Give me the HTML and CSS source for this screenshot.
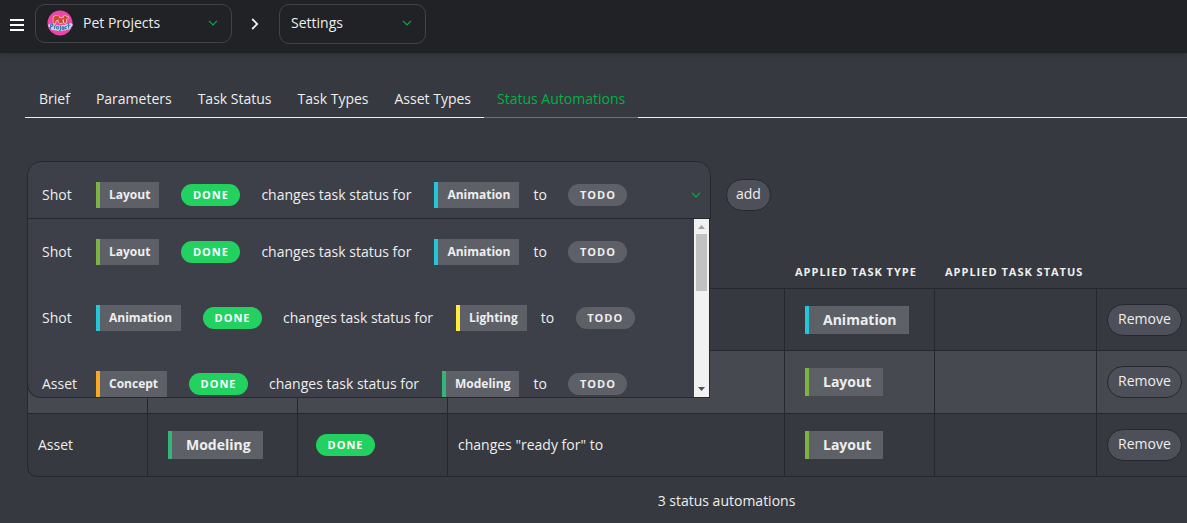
FILE: index.html
```html
<!DOCTYPE html>
<html lang="en">
<head>
<meta charset="utf-8">
<meta name="viewport" content="width=device-width, initial-scale=1">
<title>Pet Projects - Settings</title>
<link rel="stylesheet" href="styles.css">
</head>
<body>
<header class="topbar">
  <button class="menu-button" type="button" aria-label="Menu"><span></span><span></span><span></span></button>
  <button class="picker picker-project" type="button">
    <svg class="avatar" viewBox="0 0 26 26" aria-hidden="true">
      <circle cx="13" cy="13" r="12.5" fill="#ee45a6"/>
      <g fill="none" stroke-linecap="round" stroke-linejoin="round">
        <path d="M7.500 12.500V7.500c4-2 6 1 .5 2.500M13 11c3-.5 1-3-.3-1.500-1 2 .5 3 2.300 2.200M18 6.500v5.500M16 8.500l4-.8" stroke="#f3d9dc" stroke-width="3.400"/>
        <path d="M3 15.500l5 .8 5 1 5-.8 6-1.500M5 18l4 .8 4 .4 5-.7 4-1" stroke="#c3d9ea" stroke-width="3.400"/>
        <path d="M7.500 12.500V7.500c4-2 6 1 .5 2.500M13 11c3-.5 1-3-.3-1.500-1 2 .5 3 2.300 2.200M18 6.500v5.500M16 8.500l4-.8" stroke="#c94b25" stroke-width="2.200"/>
        <path d="M3.500 18.500v-4c3-1 3.500 2 .3 2M7.500 18.500v-2.300l1.300-.4M10.500 16.500a1.200 1.200 0 1 0 .1 0M13.500 16v4l-1 .5M15 18h2c0-2-2-2-2 0s1.500 1.500 2 1M19.500 16.200c-2 0-2 3 0 2.500M21.500 13.500v4.500M20.500 15.500l2.500-.3" stroke="#3c78aa" stroke-width="1.100"/>
      </g>
    </svg>
    <span class="picker-label">Pet Projects</span>
    <svg class="chevron" viewBox="0 0 10 6" aria-hidden="true"><path d="M1 .8l4 4 4-4"/></svg>
  </button>
  <svg class="crumb" viewBox="0 0 8 12" aria-hidden="true"><path d="M1.200 1l5 5-5 5"/></svg>
  <button class="picker picker-section" type="button">
    <span class="picker-label">Settings</span>
    <svg class="chevron" viewBox="0 0 10 6" aria-hidden="true"><path d="M1 .8l4 4 4-4"/></svg>
  </button>
</header>
<main class="content">
  <nav class="tabs">
    <a class="tab" href="#brief">Brief</a>
    <a class="tab" href="#parameters">Parameters</a>
    <a class="tab" href="#task-status">Task Status</a>
    <a class="tab" href="#task-types">Task Types</a>
    <a class="tab" href="#asset-types">Asset Types</a>
    <a class="tab tab-active" href="#status-automations" aria-current="page">Status Automations</a>
  </nav>
  <section class="chooser">
    <div class="combo">
      <button class="combo-current rule" type="button" aria-expanded="true">
        <span class="entity">Shot</span><span class="tag layout">Layout</span><span class="pill done">Done</span><span class="change">changes task status for</span><span class="tag animation">Animation</span><span class="to">to</span><span class="pill">Todo</span>
        <svg class="chevron" viewBox="0 0 10 6" aria-hidden="true"><path d="M1 .8l4 4 4-4"/></svg>
      </button>
      <div class="combo-panel">
        <ul class="options" role="listbox" aria-label="Status automations">
          <li class="rule" role="option" aria-selected="true"><span class="entity">Shot</span><span class="tag layout">Layout</span><span class="pill done">Done</span><span class="change">changes task status for</span><span class="tag animation">Animation</span><span class="to">to</span><span class="pill">Todo</span></li>
          <li class="rule" role="option" aria-selected="false"><span class="entity">Shot</span><span class="tag animation">Animation</span><span class="pill done">Done</span><span class="change">changes task status for</span><span class="tag lighting">Lighting</span><span class="to">to</span><span class="pill">Todo</span></li>
          <li class="rule" role="option" aria-selected="false"><span class="entity">Asset</span><span class="tag concept">Concept</span><span class="pill done">Done</span><span class="change">changes task status for</span><span class="tag modeling">Modeling</span><span class="to">to</span><span class="pill">Todo</span></li>
        </ul>
        <div class="scrollbar" aria-hidden="true">
          <svg viewBox="0 0 15 15"><path d="M4 10h7L7.500 6z" fill="#a3a3a3"/></svg>
          <div class="thumb"></div>
          <svg class="scroll-down" viewBox="0 0 15 15"><path d="M4 5h7L7.500 9z" fill="#505050"/></svg>
        </div>
      </div>
    </div>
    <button class="button add" type="button">add</button>
  </section>
  <table class="rules">
    <colgroup><col class="col-entity"><col class="col-type"><col class="col-status"><col><col class="col-type"><col class="col-applied"><col class="col-action"></colgroup>
    <thead>
      <tr><th></th><th></th><th></th><th></th><th scope="col">Applied task type</th><th scope="col">Applied task status</th><th></th></tr>
    </thead>
    <tbody>
      <tr><td></td><td></td><td></td><td></td><td><span class="tag tag-large animation">Animation</span></td><td></td><td><button class="button" type="button">Remove</button></td></tr>
      <tr><td></td><td></td><td></td><td></td><td><span class="tag tag-large layout">Layout</span></td><td></td><td><button class="button" type="button">Remove</button></td></tr>
      <tr><td>Asset</td><td><span class="tag tag-large modeling">Modeling</span></td><td><span class="pill done">Done</span></td><td>changes "ready for" to</td><td><span class="tag tag-large layout">Layout</span></td><td></td><td><button class="button" type="button">Remove</button></td></tr>
    </tbody>
  </table>
  <p class="summary">3 status automations</p>
</main>
</body>
</html>
```
FILE: styles.css
```css
* { box-sizing: border-box; }
body {
  margin: 0;
  min-height: 100vh;
  overflow: hidden;
  background: #36393f;
  color: #eee;
  font: 14px/20px "Open Sans", "Noto Sans", sans-serif;
}
button { font: inherit; color: inherit; margin: 0; cursor: pointer; }
.topbar {
  position: relative;
  display: flex;
  align-items: flex-start;
  height: 53px;
  padding: 4px 10px;
  background: #202225;
  box-shadow: 0 0 5px rgba(0, 0, 0, .3);
}
.menu-button {
  display: flex;
  flex-direction: column;
  gap: 3px;
  width: 25px;
  padding: 15px 11px 0 0;
  border: 0;
  background: none;
}
.menu-button span { width: 14px; height: 2px; background: #fff; }
.picker {
  display: flex;
  align-items: center;
  height: 39px;
  padding: 0 13px 1px 11px;
  border: 1px solid #414349;
  border-radius: 10px;
  background: none;
}
.picker-project { width: 197px; }
.picker-section { width: 147px; height: 40px; padding-bottom: 3px; }
.picker-label { flex: 1; text-align: left; }
.avatar { width: 26px; height: 26px; margin-right: 10px; }
.chevron { width: 10px; height: 6px; fill: none; stroke: #00b242; stroke-width: 1.2; }
.crumb { width: 8px; height: 12px; margin: 14px 20px 0 19px; fill: none; stroke: #eee; stroke-width: 1.8; }
.content { padding: 28px 0 10px 25px; }
.tabs { display: flex; padding-left: 1px; border-bottom: 1px solid #eee; }
.tab {
  padding: 8px 13px;
  margin-bottom: -1px;
  border-bottom: 1px solid transparent;
  color: inherit;
  text-decoration: none;
  white-space: nowrap;
}
.tab-active { color: #00b242; border-color: #00b242; }
.chooser { display: flex; align-items: flex-start; gap: 15px; margin: 43px 0 0 2px; }
.combo { position: relative; width: 684px; }
.rule { display: flex; align-items: center; height: 66px; padding: 0 14px; white-space: nowrap; }
.combo-current {
  width: 100%;
  height: 58px;
  padding-top: 9px;
  border: 1px solid #25282e;
  border-radius: 14px 14px 0 0;
  background: #3d4048;
}
.combo-current .chevron { margin: 0 -5px 0 auto; }
.combo-panel {
  position: absolute;
  top: 100%;
  left: 0;
  z-index: 1;
  display: flex;
  width: 683px;
  height: 179px;
  overflow: hidden;
  border: 1px solid #25282e;
  border-top: 0;
  border-radius: 0 0 0 14px;
  background: #3d4048;
}
.options { flex: 1; margin: 0; padding: 0; list-style: none; overflow: hidden; }
.entity { width: 54px; text-align: left; }
.change { width: 173px; text-align: left; }
.to { width: 35px; margin-left: 14px; text-align: left; }
.tag {
  display: inline-block;
  padding: 3px 9px;
  border-left: 4px solid;
  background: #5e6068;
  font-size: 12px;
  font-weight: 700;
}
.tag, .pill { color: #eee; }
.tag-large { margin-left: 10px; padding: 4px 12px 4px 14px; font-size: 14px; }
.animation { border-left-color: #26c6da; }
.layout { border-left-color: #7cb342; }
.lighting { border-left-color: #ffeb3b; }
.concept { border-left-color: #f9a825; }
.modeling { border-left-color: #33b679; }
.pill {
  display: inline-block;
  width: 59px;
  border-radius: 11px;
  background: #5e6068;
  font-size: 11px;
  line-height: 22px;
  font-weight: 700;
  letter-spacing: 1px;
  text-align: center;
  text-transform: uppercase;
}
.done { background: #22d160; color: #fff; }
.rule .done { margin: 0 21px 0 22px; }
.scrollbar { display: flex; flex-direction: column; width: 15px; background: #f1f1f1; }
.scrollbar svg { width: 15px; height: 15px; }
.thumb { width: 11px; height: 57px; margin: 0 2px; background: #c1c1c1; }
.scroll-down { margin-top: auto; }
.button {
  height: 32px;
  padding: 0 10px 2px;
  border: 1px solid #25282e;
  border-radius: 16px;
  background: #4d5058;
}
.add { margin-top: 18px; padding: 0 9px 2px; }
.rules {
  width: calc(100% - 2px);
  margin: 36px 0 0 2px;
  table-layout: fixed;
  border-spacing: 0;
}
.col-entity { width: 121px; }
.col-type, .col-status { width: 150px; }
.col-applied { width: 162px; }
.col-action { width: 90px; }
.rules th {
  height: 34px;
  padding: 0 10px;
  border-bottom: 1px solid #25282e;
  font-size: 11px;
  letter-spacing: 1px;
  text-align: left;
  text-transform: uppercase;
  white-space: nowrap;
}
.rules td {
  height: 63px;
  padding: 0 10px;
  border-right: 1px solid #25282e;
  border-bottom: 1px solid #25282e;
}
.rules tr:first-child td { height: 62px; }
.rules td:first-child { border-left: 1px solid #25282e; }
.rules td:last-child { border-right: 0; }
.rules td .done { margin-left: 8px; }
.rules tbody tr:nth-child(2) td { background: #46494f; }
.rules tbody tr:last-child td:first-child { border-bottom-left-radius: 10px; }
.summary { margin: 14px 0 0; padding-left: 241px; text-align: center; }
```
